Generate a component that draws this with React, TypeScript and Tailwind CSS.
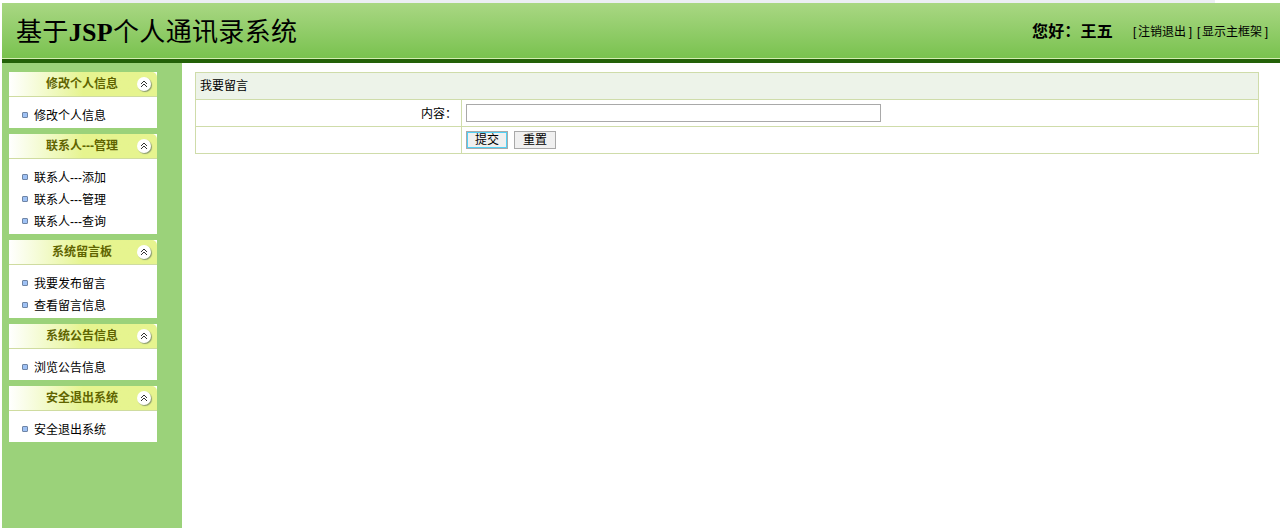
const cjk = "font-['Liberation_Sans','Noto_Sans_CJK_SC',sans-serif]";

const menus = [
  { title: "修改个人信息", items: ["修改个人信息"] },
  { title: "联系人---管理", items: ["联系人---添加", "联系人---管理", "联系人---查询"] },
  { title: "系统留言板", items: ["我要发布留言", "查看留言信息"] },
  { title: "系统公告信息", items: ["浏览公告信息"] },
  { title: "安全退出系统", items: ["安全退出系统"] },
];

function Collapse() {
  return (
    <span className="flex h-[14px] w-[14px] items-center justify-center rounded-full bg-white shadow-[1px_1px_1px_#8a9a70]">
      <svg width="8" height="8" viewBox="0 0 8 8" fill="none" stroke="#333" strokeWidth="1">
        <path d="M1 4 L4 1 L7 4" />
        <path d="M1 7 L4 4 L7 7" />
      </svg>
    </span>
  );
}

function Panel({ title, items }: { title: string; items: string[] }) {
  return (
    <section className="w-[148px] bg-white">
      <div className="flex h-[25px] items-center rounded-t-[5px] border-b border-[#cfdca0] bg-gradient-to-r from-white to-[#e6f48f] to-50% pl-[27px] pr-[6px]">
        <h3 className="w-[92px] text-center text-[12px] font-bold leading-[22px] text-[#5f6400]">{title}</h3>
        <span className="ml-auto"><Collapse /></span>
      </div>
      <ul className="pb-[2px] pt-[7px]">
        {items.map((t) => (
          <li key={t} className="flex h-[22px] items-center pl-[13px] pt-[2px] text-[12px] text-black">
            <span className="-mt-[2px] mr-[6px] h-[6px] w-[6px] rounded-[1px] border border-[#6f85a5] bg-[#9fc2f5]" />
            {t}
          </li>
        ))}
      </ul>
    </section>
  );
}

function Bracketed({ children }: { children: string }) {
  return (
    <span className="flex">
      <span className="w-[5px]">[</span>
      {children}
      <span className="w-[6px] text-right">]</span>
    </span>
  );
}

export default function App() {
  return (
    <div className={`${cjk} flex h-[528px] w-[1280px] flex-col overflow-hidden bg-white pl-[2px]`}>
      <div className="ml-[98px] h-[3px] w-[1115px] shrink-0 bg-[#eceef4]" />
      <header className="flex h-[55px] shrink-0 items-center justify-between bg-gradient-to-b from-[#a9d783] to-[#79c24e] pl-[14px] pr-[12px] pt-[3px]">
        <h1 className="text-[26px] font-normal leading-none tracking-[0.33px] text-black">
          基于<b className="font-['Liberation_Serif',serif] font-bold">JSP</b>个人通讯录系统
        </h1>
        <div className="flex items-center text-black">
          <span className="mr-[20px] text-[16px] font-bold tracking-[0.2px]">您好：王五</span>
          <div className="flex gap-[5px] text-[12px]">
            <Bracketed>注销退出</Bracketed>
            <Bracketed>显示主框架</Bracketed>
          </div>
        </div>
      </header>
      <div className="h-[5px] shrink-0 border-t border-[#d3ecb0] bg-[#236108]" />
      <div className="flex min-h-0 flex-1">
        <aside className="flex w-[180px] shrink-0 flex-col gap-[6px] bg-[#9bd27a] pl-[7px] pt-[9px]">
          {menus.map((m) => (
            <Panel key={m.title} title={m.title} items={m.items} />
          ))}
        </aside>
        <main className="flex-1 pl-[13px] pr-[21px] pt-[9px]">
          <table className="w-full border-collapse text-[12px] text-black">
            <tbody>
              <tr className="h-[27px]">
                <td colSpan={2} className="border border-[#cfdcaa] bg-[#edf3e9] pl-[4px]">我要留言</td>
              </tr>
              <tr className="h-[27px]">
                <td className="w-[266px] border border-[#cfdcaa] pr-[4px] pt-[1px] text-right">内容：</td>
                <td className="border border-[#cfdcaa] pl-[4px]">
                  <input className="block h-[18px] w-[415px] border border-[#a9a9a9] bg-white" />
                </td>
              </tr>
              <tr className="h-[27px]">
                <td className="border border-[#cfdcaa]" />
                <td className="border border-[#cfdcaa] pl-[4px]">
                  <div className="flex gap-[6px]">
                    <button className="h-[18px] w-[42px] border-2 border-[#52d0f5] bg-[#f0f0f0] leading-none outline outline-1 -outline-offset-1 outline-[#a9a9a9]">提交</button>
                    <button className="h-[18px] w-[42px] border border-[#a9a9a9] bg-[#f0f0f0] leading-none">重置</button>
                  </div>
                </td>
              </tr>
            </tbody>
          </table>
        </main>
      </div>
    </div>
  );
}
